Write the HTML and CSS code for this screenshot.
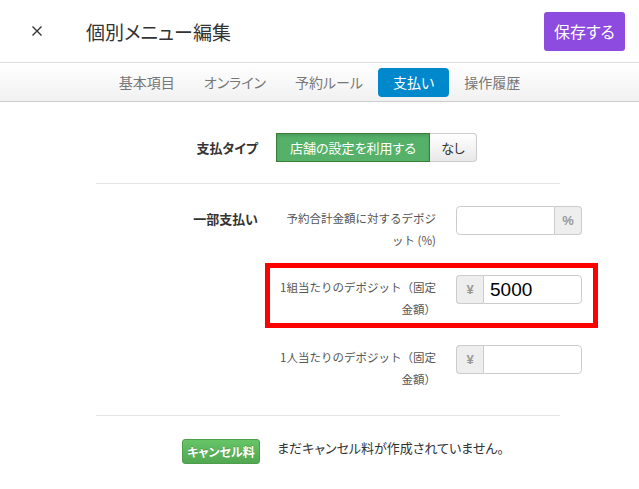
FILE: index.html
```html
<!DOCTYPE html>
<html lang="ja">
<head>
  <meta charset="UTF-8">
  <title>個別メニュー編集</title>
  <link rel="stylesheet" href="styles.css">
</head>
<body>
  <header class="topbar">
    <button class="close" aria-label="閉じる">
      <svg width="12" height="12" viewBox="0 0 12 12"><path d="M1.5 1.5 L10.5 10.5 M10.5 1.5 L1.5 10.5" stroke="#333" stroke-width="1.4" fill="none"/></svg>
    </button>
    <h1 class="title">個別メニュー編集</h1>
    <button class="save">保存する</button>
  </header>

  <nav class="tabs">
    <a class="tab">基本項目</a>
    <a class="tab">オンライン</a>
    <a class="tab">予約ルール</a>
    <a class="tab active">支払い</a>
    <a class="tab">操作履歴</a>
  </nav>

  <main class="content">
    <div class="row type-row">
      <div class="row-label">支払タイプ</div>
      <div class="btn-group">
        <button class="seg seg-on">店舗の設定を利用する</button>
        <button class="seg">なし</button>
      </div>
    </div>

    <hr class="divider">

    <div class="row partial">
      <div class="row-label">一部支払い</div>
      <div class="fields">
        <div class="field">
          <div class="field-label">予約合計金額に対するデポジット (%)</div>
          <div class="input-group">
            <input class="input" type="text">
            <span class="addon addon-right">%</span>
          </div>
        </div>
        <div class="field highlight">
          <div class="field-label">1組当たりのデポジット（固定金額）</div>
          <div class="input-group">
            <span class="addon addon-left">¥</span>
            <input class="input big" type="text" value="5000">
          </div>
        </div>
        <div class="field">
          <div class="field-label">1人当たりのデポジット（固定金額）</div>
          <div class="input-group">
            <span class="addon addon-left">¥</span>
            <input class="input" type="text">
          </div>
        </div>
      </div>
    </div>

    <hr class="divider divider-low">

    <div class="row cancel-row">
      <div class="cancel-cell"><button class="cancel-btn">キャンセル料</button></div>
      <p class="note">まだキャンセル料が作成されていません。</p>
    </div>
  </main>
</body>
</html>
```

FILE: styles.css
```css
body {
  margin: 0;
  font-family: "Noto Sans CJK JP", "Noto Sans", sans-serif;
  font-feature-settings: "palt";
  color: #333;
  background: #fff;
}
button {
  font-family: inherit;
  font-feature-settings: inherit;
}
.topbar {
  height: 62px;
  display: flex;
  align-items: center;
  padding: 0 14px 0 28px;
}
.close {
  width: 18px;
  height: 18px;
  padding: 0;
  border: none;
  background: none;
  display: flex;
  align-items: center;
  justify-content: center;
}
.title {
  margin: 0 0 0 40px;
  font-size: 19px;
  font-weight: normal;
  color: #333;
}
.save {
  margin-left: auto;
  width: 81px;
  height: 39px;
  border: none;
  border-radius: 3px;
  background: #8e4be0;
  color: #fff;
  font-size: 16px;
}
.tabs {
  height: 37px;
  border-top: 1px solid #ddd;
  border-bottom: 1px solid #ccc;
  background: linear-gradient(#fff, #f1f1f1);
  display: flex;
  justify-content: center;
  align-items: center;
  gap: 1px;
  padding-top: 1px;
  box-sizing: content-box;
}
.tab {
  padding: 0 14px;
  height: 29px;
  line-height: 29px;
  font-size: 14px;
  color: #777;
  border-radius: 4px;
}
.tab.active {
  padding: 0 15px;
  background: #0088cc;
  color: #fff;
}
.content {
  width: 464px;
  margin-left: 96px;
  padding-top: 31px;
}
.row {
  display: flex;
  gap: 18px;
}
.row-label {
  width: 162px;
  flex: none;
  text-align: right;
  font-size: 13px;
  font-weight: bold;
  line-height: 22px;
}
.type-row .row-label {
  line-height: 29px;
}
.btn-group {
  display: flex;
  height: 29px;
}
.seg {
  height: 29px;
  font-size: 13px;
  padding: 0 10px;
  border: 1px solid #ccc;
  background: linear-gradient(#fff, #e8e8e8);
  color: #333;
  border-radius: 0 4px 4px 0;
  border-left: none;
  width: 47px;
}
.seg-on {
  width: 154px;
  background: #55b16a;
  border: 1px solid #3a7f36;
  color: #fff;
  border-radius: 0;
  box-shadow: inset 0 2px 3px rgba(0,0,0,0.12);
}
.divider {
  border: none;
  border-top: 1px solid #e6e6e6;
  margin: 21px 0 22px;
}
.partial .row-label {
  padding-top: 2px;
}
.fields {
  flex: none;
  display: flex;
  flex-direction: column;
  gap: 23px;
}
.field {
  width: 306px;
  display: flex;
  gap: 20px;
  position: relative;
}
.field + .field + .field {
  margin-top: 1px;
}
.field-label {
  width: 160px;
  flex: none;
  text-align: right;
  font-size: 11.5px;
  font-feature-settings: normal;
  line-height: 21.5px;
  padding-top: 2px;
  color: #555;
  height: 44px;
}
.input-group {
  display: flex;
  width: 126px;
  height: 29px;
}
.input {
  flex: 1;
  min-width: 0;
  border: 1px solid #ccc;
  border-radius: 4px 0 0 4px;
  padding: 0 6px;
  box-sizing: border-box;
  height: 29px;
  font-family: "Liberation Sans", Arial, sans-serif;
}
.addon {
  width: 27px;
  flex: none;
  box-sizing: border-box;
  height: 29px;
  line-height: 27px;
  text-align: center;
  background: #eee;
  border: 1px solid #ccc;
  color: #999;
  font-size: 13px;
  font-weight: bold;
  font-family: "Liberation Sans", Arial, sans-serif;
}
.addon-right {
  border-left: none;
  border-radius: 0 4px 4px 0;
}
.addon-left {
  border-right: none;
  border-radius: 4px 0 0 4px;
}
.addon-left + .input {
  border-radius: 0 4px 4px 0;
}
.input.big {
  font-size: 19px;
  color: #000;
}
.highlight::after {
  content: "";
  position: absolute;
  top: -12px;
  bottom: -7px;
  left: -11px;
  right: -16px;
  border: 5px solid #f00;
}
.divider-low {
  margin: 24px 0 23px;
}
.cancel-row {
  gap: 17px;
  align-items: flex-start;
}
.cancel-cell {
  width: 164px;
  flex: none;
  display: flex;
  justify-content: flex-end;
}
.cancel-btn {
  width: 78px;
  height: 25px;
  padding: 0;
  border: 1px solid #4c9e4c;
  border-radius: 3px;
  background: linear-gradient(#66c466, #52a852);
  color: #fff;
  font-size: 12px;
  font-weight: bold;
  text-shadow: 0 -1px 0 rgba(0,0,0,0.2);
}
.note {
  margin: 0;
  font-size: 13px;
  line-height: 18px;
  color: #333;
}
```
